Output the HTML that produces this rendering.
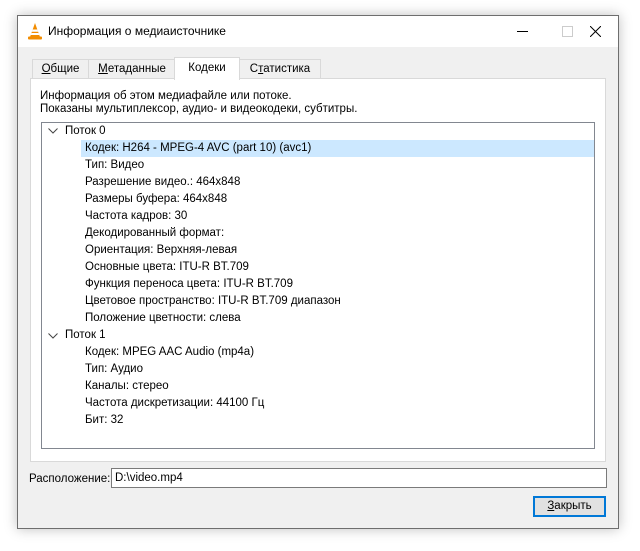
<!DOCTYPE html>
<html><head><meta charset="utf-8"><style>
body{margin:0;width:640px;height:551px;background:#fff;position:relative;overflow:hidden;font-family:"Segoe UI","Liberation Sans","DejaVu Sans",sans-serif;font-size:11.5px;color:#000}
.win{position:absolute;left:17px;top:15px;width:600px;height:512px;border:1px solid #6e6e6e;background:#f0f0f0;box-shadow:0 0 12px rgba(0,0,0,.25)}
.title{position:absolute;left:0;top:0;width:600px;height:31px;background:#fff}
.abs{position:absolute;white-space:nowrap}
.tab{position:absolute;top:43px;height:19px;border:1px solid #d9d9d9;border-bottom:none;background:#f0f0f0;line-height:19px;text-align:center}
.panel{position:absolute;left:12px;top:62px;width:574px;height:382px;background:#fff;border:1px solid #d9d9d9}
.tree{position:absolute;left:10px;top:43px;width:552px;height:325px;border:1px solid #828790}
.row{position:absolute;height:17px;line-height:17px;white-space:nowrap}
u{text-decoration:underline}
</style></head><body>
<div class="win">
<div class="title">
<svg class="abs" style="left:9px;top:7px" width="16" height="17" viewBox="0 0 16 17"><path d="M8 0 L13 14 L3 14 Z" fill="#f28c00"/><path d="M5.6 6.5 h4.8 l.8 2.3 h-6.4z M4.4 10 h7.2 l.8 2 h-8.8z" fill="#fff"/><rect x="1" y="13.5" width="14" height="3" rx="1" fill="#f28c00"/></svg>
<div class="abs" style="left:30px;top:8px;font-size:12px">Информация о медиаисточнике</div>
<div class="abs" style="left:499px;top:15px;width:11px;height:1px;background:#000"></div>
<div class="abs" style="left:544px;top:10px;width:9px;height:9px;border:1px solid #ccc"></div>
<svg class="abs" style="left:572px;top:10px" width="11" height="11"><path d="M0 0L11 11M11 0L0 11" stroke="#000" stroke-width="1"/></svg>
</div>
<div class="tab" style="left:14px;width:55px"><u>О</u>бщие</div>
<div class="tab" style="left:70px;width:86px"><u>М</u>етаданные</div>
<div class="tab" style="left:156px;top:41px;height:22px;width:64px;background:#fff;z-index:2;line-height:21px">Кодеки</div>
<div class="tab" style="left:221px;width:80px">С<u>т</u>атистика</div>
<div class="panel">
<div class="abs" style="left:9px;top:11px;line-height:13px">Информация об этом медиафайле или потоке.<br>Показаны мультиплексор, аудио- и видеокодеки, субтитры.</div>
<div class="tree">
<div class="row" style="left:39px;top:17px;width:513px;background:#cce8ff"></div>
<svg class="abs" style="left:6px;top:5px" width="10" height="6"><path d="M0.5 0.5L5 5L9.5 0.5" fill="none" stroke="#444"/></svg>
<div class="row" style="left:23px;top:0">Поток 0</div>
<div class="row" style="left:43px;top:17px">Кодек: H264 - MPEG-4 AVC (part 10) (avc1)</div>
<div class="row" style="left:43px;top:34px">Тип: Видео</div>
<div class="row" style="left:43px;top:51px">Разрешение видео.: 464x848</div>
<div class="row" style="left:43px;top:68px">Размеры буфера: 464x848</div>
<div class="row" style="left:43px;top:85px">Частота кадров: 30</div>
<div class="row" style="left:43px;top:102px">Декодированный формат:</div>
<div class="row" style="left:43px;top:119px">Ориентация: Верхняя-левая</div>
<div class="row" style="left:43px;top:136px">Основные цвета: ITU-R BT.709</div>
<div class="row" style="left:43px;top:153px">Функция переноса цвета: ITU-R BT.709</div>
<div class="row" style="left:43px;top:170px">Цветовое пространство: ITU-R BT.709 диапазон</div>
<div class="row" style="left:43px;top:187px">Положение цветности: слева</div>
<svg class="abs" style="left:6px;top:210px" width="10" height="6"><path d="M0.5 0.5L5 5L9.5 0.5" fill="none" stroke="#444"/></svg>
<div class="row" style="left:23px;top:204px">Поток 1</div>
<div class="row" style="left:43px;top:221px">Кодек: MPEG AAC Audio (mp4a)</div>
<div class="row" style="left:43px;top:238px">Тип: Аудио</div>
<div class="row" style="left:43px;top:255px">Каналы: стерео</div>
<div class="row" style="left:43px;top:272px">Частота дискретизации: 44100 Гц</div>
<div class="row" style="left:43px;top:289px">Бит: 32</div>
</div>
</div>
<div class="abs" style="left:11px;top:457px">Расположение:</div>
<div class="abs" style="left:93px;top:452px;width:494px;height:18px;border:1px solid #7a7a7a;background:#fff;line-height:18px;text-indent:3px">D:\video.mp4</div>
<div class="abs" style="left:515px;top:480px;width:69px;height:17px;border:2px solid #0078d7;background:#e1e1e1;text-align:center;line-height:17px"><u>З</u>акрыть</div>
</div>
</body></html>
